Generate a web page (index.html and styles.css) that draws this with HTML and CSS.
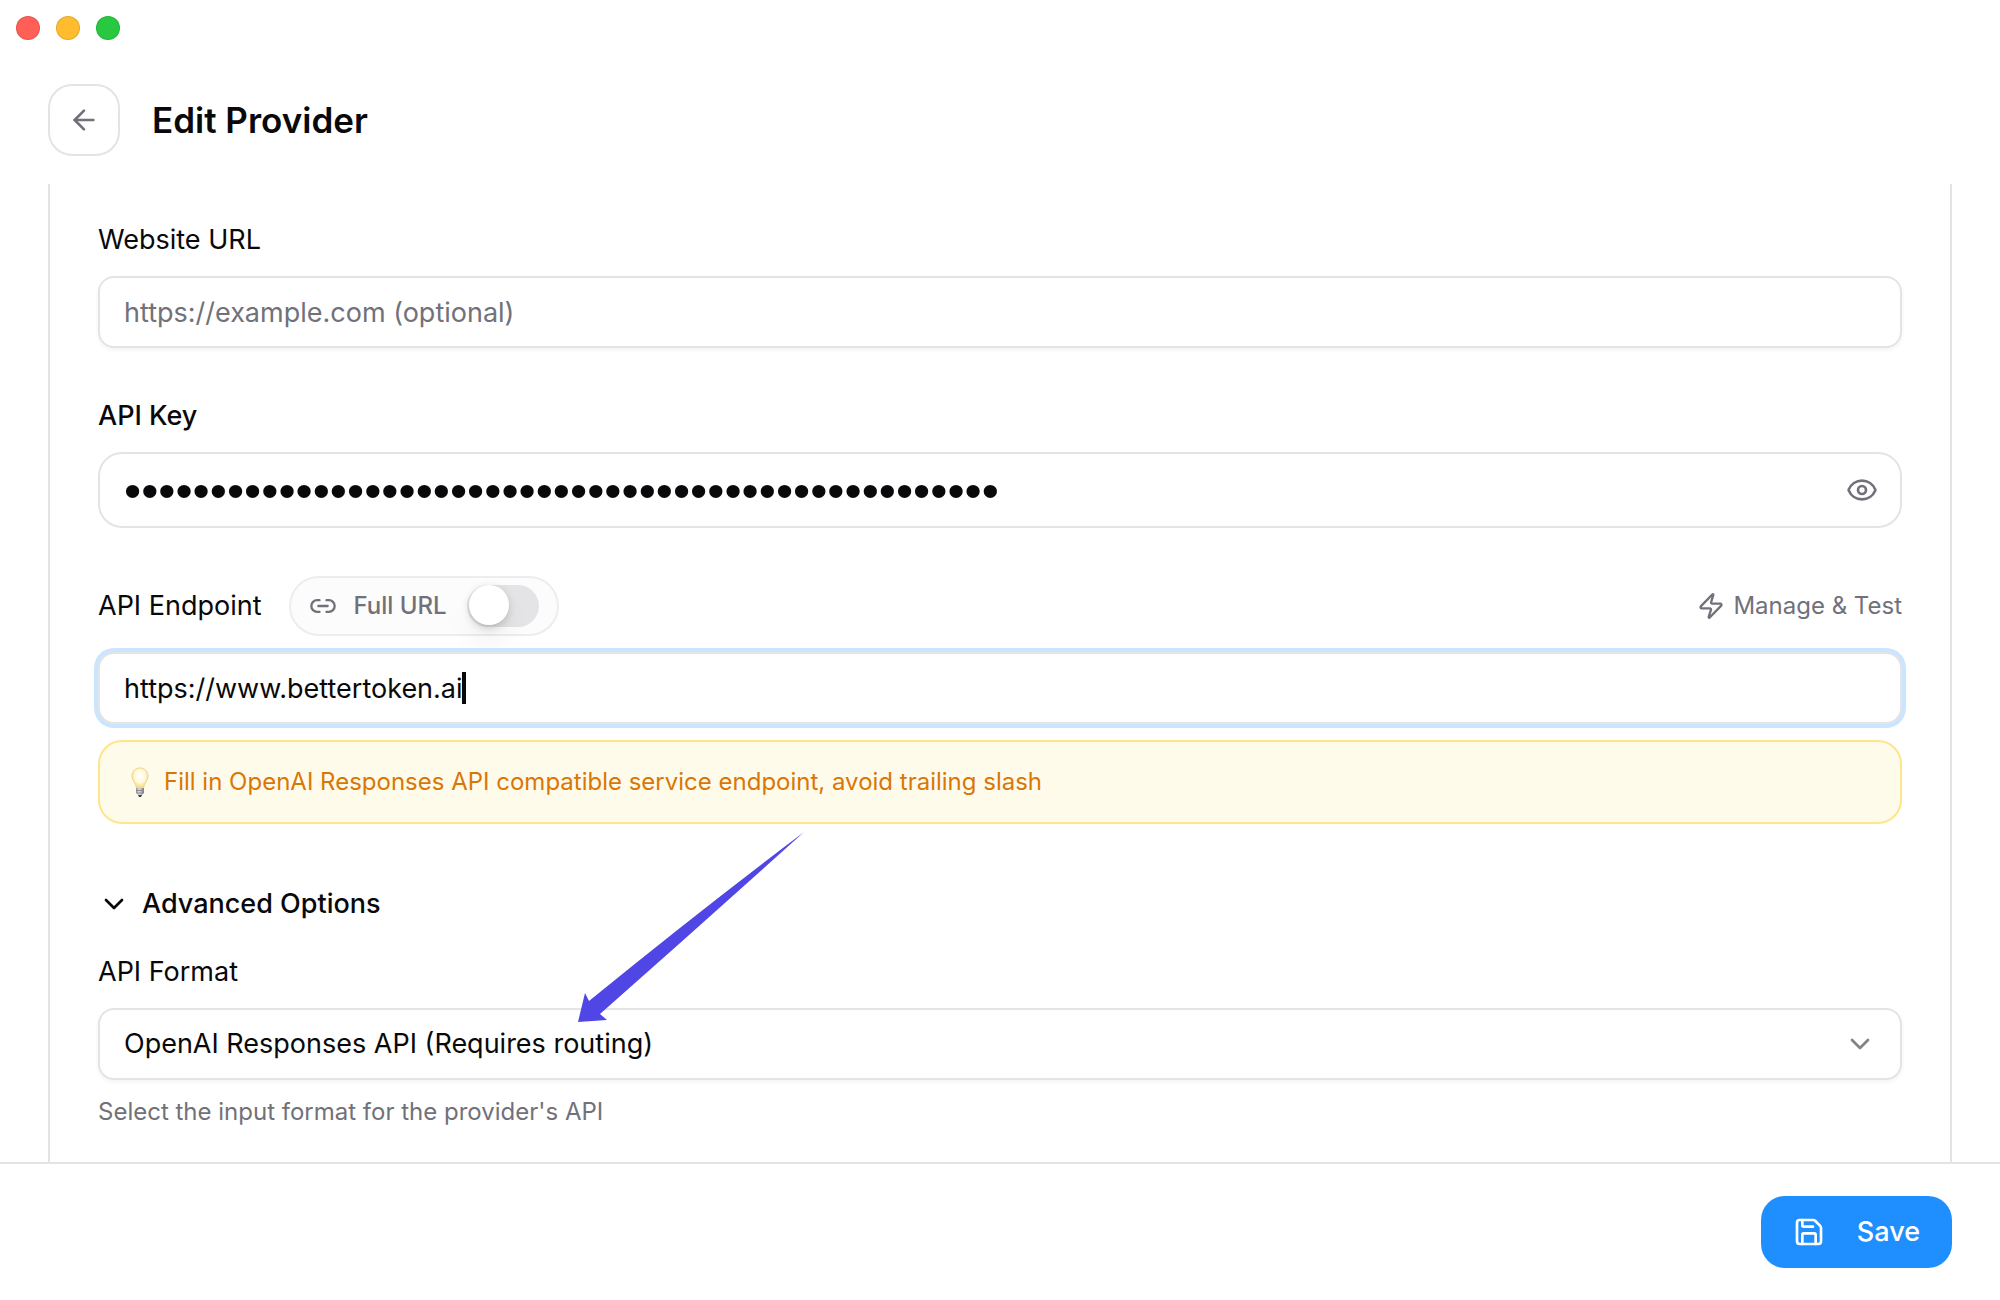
FILE: index.html
```html
<!DOCTYPE html>
<html lang="en">
<head>
    <meta charset="UTF-8">
    <meta name="viewport" content="width=device-width, initial-scale=1.0">
    <title>Edit Provider</title>
    <link rel="stylesheet" href="styles.css">
</head>
<body>
    <div class="titlebar">
        <span class="dot dot-close"></span>
        <span class="dot dot-minimize"></span>
        <span class="dot dot-zoom"></span>
    </div>

    <header class="page-header">
        <button class="back-button" type="button" aria-label="Back">
            <svg class="icon" viewBox="0 0 24 24"><path d="m12 19-7-7 7-7"/><path d="M19 12H5"/></svg>
        </button>
        <h1>Edit Provider</h1>
    </header>

    <main class="content">
        <form class="card" id="providerForm">
            <div class="field">
                <label for="website">Website URL</label>
                <input class="control" id="website" type="text" placeholder="https://example.com (optional)">
            </div>

            <div class="field">
                <label class="strong" for="apiKey">API Key</label>
                <div class="control-wrap">
                    <input class="control control-key" id="apiKey" type="password" value="000000000000000000000000000000000000000000000000000">
                    <button class="reveal-button" type="button" aria-label="Show API key">
                        <svg class="icon" viewBox="0 0 24 24"><path d="M2.062 12.348a1 1 0 0 1 0-.696 10.75 10.75 0 0 1 19.876 0 1 1 0 0 1 0 .696 10.75 10.75 0 0 1-19.876 0"/><circle cx="12" cy="12" r="3"/></svg>
                    </button>
                </div>
            </div>

            <div class="field endpoint">
                <div class="endpoint-head">
                    <label for="endpoint">API Endpoint</label>
                    <div class="url-pill">
                        <svg class="icon icon-small" viewBox="0 0 24 24"><path d="M9 17H7A5 5 0 0 1 7 7h2"/><path d="M15 7h2a5 5 0 1 1 0 10h-2"/><path d="M8 12h8"/></svg>
                        <label for="fullUrl">Full URL</label>
                        <input class="switch" id="fullUrl" type="checkbox" role="switch">
                    </div>
                    <button class="manage-button" type="button">
                        <svg class="icon icon-small" viewBox="0 0 24 24"><path d="M4 14a1 1 0 0 1-.78-1.63l9.9-10.2a.5.5 0 0 1 .86.46l-1.92 6.02A1 1 0 0 0 13 10h7a1 1 0 0 1 .78 1.63l-9.9 10.2a.5.5 0 0 1-.86-.46l1.92-6.02A1 1 0 0 0 11 14z"/></svg>
                        Manage &amp; Test
                    </button>
                </div>
                <div class="control-wrap">
                    <input class="control active" id="endpoint" type="text" value="https://www.bettertoken.ai">
                    <span class="caret"></span>
                </div>
                <p class="hint">
                    <svg class="bulb" viewBox="0 0 20 32">
                        <defs>
                            <radialGradient id="glass" cx="50%" cy="40%" r="55%">
                                <stop offset="0" stop-color="#ffffff"/>
                                <stop offset="0.6" stop-color="#fff8dc"/>
                                <stop offset="1" stop-color="#f7dc86"/>
                            </radialGradient>
                            <linearGradient id="metal">
                                <stop offset="0" stop-color="#8c8c90"/>
                                <stop offset="0.4" stop-color="#e2e2e6"/>
                                <stop offset="1" stop-color="#77777c"/>
                            </linearGradient>
                        </defs>
                        <path d="M10 2c5 0 8 3.600 8 8 0 5-4 7-4.500 12h-7C6 17 2 15 2 10c0-4.400 3-8 8-8z" fill="url(#glass)" stroke="#efd58a"/>
                        <path d="M6 22h8v5l-2 2H8l-2-2z" fill="url(#metal)"/>
                        <path d="M6 24.500h8M7 27h6" stroke="#8c8c90"/>
                        <path d="M8 29h4l-1 2H9z" fill="#3c3c40"/>
                    </svg>
                    Fill in OpenAI Responses API compatible service endpoint, avoid trailing slash
                </p>
            </div>

            <button class="advanced-toggle" type="button" aria-expanded="true">
                <svg class="icon" viewBox="0 0 24 24"><path d="m6 9 6 6 6-6"/></svg>
                Advanced Options
            </button>

            <div class="field api-format">
                <label for="apiFormat">API Format</label>
                <div class="control-wrap">
                    <select class="control" id="apiFormat">
                        <option>OpenAI Responses API (Requires routing)</option>
                    </select>
                    <svg class="icon select-chevron" viewBox="0 0 24 24"><path d="m6 9 6 6 6-6"/></svg>
                    <svg class="pointer" viewBox="0 0 226 192"><path d="M0 190 7 161l4 8Q120 80 226 0 124 92 22 182l7 6z"/></svg>
                </div>
                <p class="help">Select the input format for the provider's API</p>
            </div>
        </form>
    </main>

    <footer class="footer">
        <button class="save-button" type="submit" form="providerForm">
            <svg class="icon" viewBox="0 0 24 24"><path d="M15.200 3a2 2 0 0 1 1.400.6l3.800 3.800a2 2 0 0 1 .6 1.400V19a2 2 0 0 1-2 2H5a2 2 0 0 1-2-2V5a2 2 0 0 1 2-2z"/><path d="M17 21v-7a1 1 0 0 0-1-1H8a1 1 0 0 0-1 1v7"/><path d="M7 3v4a1 1 0 0 0 1 1h7"/></svg>
            Save
        </button>
    </footer>
</body>
</html>
```
FILE: styles.css
```css
* {
    box-sizing: border-box;
}

body {
    margin: 0;
    height: 100vh;
    display: flex;
    flex-direction: column;
    background-color: #fff;
    color: #09090b;
    font-family: 'Inter', sans-serif;
    font-size: 27px;
    line-height: 32px;
}

button, input, select {
    font: inherit;
    color: inherit;
}

button {
    display: flex;
    align-items: center;
    padding: 0;
    border: none;
    background: none;
    cursor: pointer;
}

h1, p {
    margin: 0;
}

.icon {
    width: 32px;
    height: 32px;
    flex-shrink: 0;
    fill: none;
    stroke: currentColor;
    stroke-width: 2;
    stroke-linecap: round;
    stroke-linejoin: round;
}

.icon-small {
    width: 28px;
    height: 28px;
}

/* window chrome */
.titlebar {
    display: flex;
    gap: 16px;
    padding: 16px;
}

.dot {
    width: 24px;
    height: 24px;
    border-radius: 50%;
    border: 1px solid rgba(0, 0, 0, 0.1);
}

.dot-close {
    background-color: #ff5f57;
}

.dot-minimize {
    background-color: #febc2e;
}

.dot-zoom {
    background-color: #28c840;
}

.page-header {
    display: flex;
    align-items: center;
    gap: 32px;
    padding: 28px 48px;
}

.back-button {
    width: 72px;
    height: 72px;
    justify-content: center;
    border: 2px solid #e4e4e7;
    border-radius: 24px;
    color: #71717a;
}

h1 {
    font-size: 35px;
    font-weight: 600;
    line-height: 40px;
}

/* form */
.content {
    flex: 1;
    min-height: 0;
    padding: 0 48px;
    overflow: hidden;
}

.card {
    min-height: 100%;
    padding: 40px 48px 48px;
    border: solid #e4e4e7;
    border-width: 0 2px;
}

.field {
    display: flex;
    flex-direction: column;
    gap: 20px;
    margin-bottom: 52px;
}

.strong {
    font-weight: 500;
}

.control-wrap {
    position: relative;
}

.control {
    display: block;
    width: 100%;
    height: 72px;
    padding: 0 24px;
    border: 2px solid #e4e4e7;
    border-radius: 16px;
    background-color: #fff;
    box-shadow: 0 2px 4px rgba(0, 0, 0, 0.05);
    outline: none;
    appearance: none;
}

.control::placeholder {
    color: #71717a;
    opacity: 1;
}

.control.active {
    box-shadow: 0 0 0 4px #cce5ff;
}

/* larger type so the masking bullets come out big */
.control-key {
    height: 76px;
    border-radius: 24px;
    box-shadow: none;
    font-family: 'Liberation Sans', sans-serif;
    font-size: 49px;
}

.reveal-button {
    position: absolute;
    top: 22px;
    right: 24px;
    color: #71717a;
}

.endpoint {
    gap: 16px;
    margin-top: -4px;
    margin-bottom: 64px;
}

.endpoint-head {
    display: flex;
    align-items: center;
    gap: 28px;
}

.url-pill {
    display: flex;
    align-items: center;
    gap: 16px;
    height: 60px;
    padding: 0 18px;
    border: 2px solid #ededef;
    border-radius: 30px;
    background-color: #fcfcfc;
    color: #71717a;
    font-size: 24px;
    font-weight: 500;
}

.switch {
    width: 72px;
    height: 42px;
    margin: 0 0 0 4px;
    border-radius: 21px;
    background-color: #e4e4e7;
    appearance: none;
    cursor: pointer;
}

.switch::before {
    content: "";
    display: block;
    width: 40px;
    height: 40px;
    margin-left: 2px;
    border-radius: 50%;
    background-color: #fff;
    box-shadow: 0 20px 30px -6px rgba(0, 0, 0, 0.1), 0 8px 12px -8px rgba(0, 0, 0, 0.1), 0 2px 8px rgba(0, 0, 0, 0.15);
}

.manage-button {
    gap: 8px;
    margin-left: auto;
    color: #71717a;
    font-size: 24px;
}

.caret {
    position: absolute;
    top: 20px;
    left: 364px;
    width: 4px;
    height: 32px;
    background-color: #09090b;
}

.hint {
    display: flex;
    align-items: center;
    gap: 14px;
    height: 84px;
    padding: 0 30px;
    border: 2px solid #fde68a;
    border-radius: 24px;
    background-color: #fffbeb;
    color: #d97706;
    font-size: 24px;
}

.bulb {
    width: 20px;
    height: 32px;
    fill: none;
}

.advanced-toggle {
    gap: 12px;
    margin-bottom: 36px;
    font-weight: 500;
}

.select-chevron {
    position: absolute;
    top: 20px;
    right: 26px;
    opacity: 0.5;
    pointer-events: none;
}

/* arrow drawn over the form, tip on the API format */
.pointer {
    position: absolute;
    left: 480px;
    bottom: 56px;
    width: 226px;
    height: 192px;
    fill: #5046e5;
    pointer-events: none;
}

.help {
    margin-top: -4px;
    color: #71717a;
    font-size: 24px;
}

.footer {
    display: flex;
    justify-content: flex-end;
    padding: 32px 48px;
    border-top: 2px solid #e4e4e7;
}

.save-button {
    gap: 32px;
    height: 72px;
    padding: 0 32px;
    border-radius: 24px;
    background-color: #1f8fff;
    color: #fff;
    font-weight: 500;
}
```
